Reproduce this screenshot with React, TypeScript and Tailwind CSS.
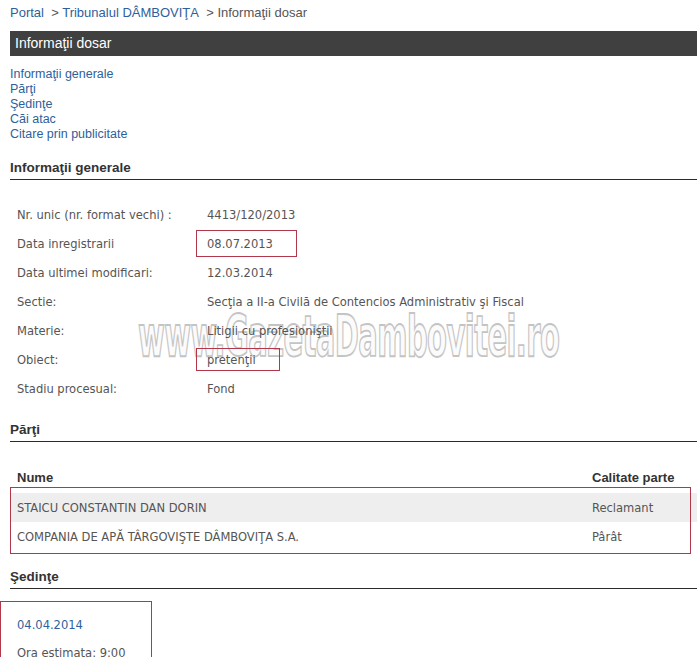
const links = [
  "Informaţii generale",
  "Părţi",
  "Şedinţe",
  "Căi atac",
  "Citare prin publicitate",
];

const details: { label: string; value: string; mark?: "date" | "obj" }[] = [
  { label: "Nr. unic (nr. format vechi) :", value: "4413/120/2013" },
  { label: "Data inregistrarii", value: "08.07.2013", mark: "date" },
  { label: "Data ultimei modificari:", value: "12.03.2014" },
  { label: "Sectie:", value: "Secţia a II-a Civilă de Contencios Administrativ şi Fiscal" },
  { label: "Materie:", value: "Litigii cu profesioniştii" },
  { label: "Obiect:", value: "pretenţii", mark: "obj" },
  { label: "Stadiu procesual:", value: "Fond" },
];

const parti = [
  { nume: "STAICU CONSTANTIN DAN DORIN", calitate: "Reclamant" },
  { nume: "COMPANIA DE APĂ TÂRGOVIŞTE DÂMBOVIŢA S.A.", calitate: "Pârât" },
];

function Heading({ children, className = "" }: { children: React.ReactNode; className?: string }) {
  return (
    <div
      className={`pb-[4px] border-b border-[#2b2b2b] text-[13.5px] leading-[15px] font-bold text-[#333] ${className}`}
    >
      {children}
    </div>
  );
}

export default function App() {
  return (
    <div className="w-[697px] h-[664px] overflow-hidden bg-white">
      <div className="relative isolate h-[657px] overflow-hidden bg-white pl-[10px] font-['Liberation_Sans',Arial,sans-serif]">
        {/* watermark */}
        <div className="absolute -z-10 left-[138px] top-[301px] pointer-events-none select-none">
          <span className="block origin-left scale-x-[0.565] whitespace-nowrap font-['DejaVu_Sans_Condensed','DejaVu_Sans',sans-serif] font-bold text-[57px] leading-[70px] tracking-[-1px] text-[#fbfbfb] [-webkit-text-stroke:1.8px_#c4c4c4]">
            www.GazetaDambovitei.ro
          </span>
        </div>

        {/* breadcrumb */}
        <div className="h-[31px] pt-[5px] text-[13px] leading-[16px] text-[#555]">
          <span className="text-[#2e5f9c]">Portal</span>
          <span>&nbsp; &gt; </span>
          <span className="text-[#2e5f9c]">Tribunalul DÂMBOVIŢA</span>
          <span>&nbsp; &gt; Informaţii dosar</span>
        </div>

        {/* title bar */}
        <div className="h-[25px] bg-[#404040] pl-[5px] flex items-center text-white text-[14px]">
          Informaţii dosar
        </div>

        {/* anchors */}
        <div className="mt-[11px] flex flex-col text-[12.5px] leading-[15px] text-[#2e5f9c]">
          {links.map((l) => (
            <span key={l}>{l}</span>
          ))}
        </div>

        <Heading className="mt-[18px]">Informaţii generale</Heading>

        {/* general info */}
        <div className="mt-[20px] pl-[7px] font-['DejaVu_Sans_Condensed','DejaVu_Sans',sans-serif] text-[12.8px] text-[#555]">
          {details.map((d) => (
            <div key={d.label} className="h-[29px] flex items-center">
              <div className="w-[190px] shrink-0">{d.label}</div>
              <div className="relative">
                {d.value}
                {d.mark === "date" && (
                  <div className="absolute left-[-11px] top-[-4px] w-[101px] h-[27px] border border-[#b0384a]" />
                )}
                {d.mark === "obj" && (
                  <div className="absolute left-[-11px] top-[-2px] w-[84px] h-[23px] border border-[#b0384a]" />
                )}
              </div>
            </div>
          ))}
        </div>

        <Heading className="mt-[19px]">Părţi</Heading>

        {/* parties table */}
        <div className="relative mt-[27px]">
          <div className="h-[18px] flex items-center text-[13px] font-bold text-[#333]">
            <div className="flex-1 pl-[7px]">Nume</div>
            <div className="w-[105px]">Calitate parte</div>
          </div>
          <div className="pt-[6px] font-['DejaVu_Sans_Condensed','DejaVu_Sans',sans-serif] text-[12.8px] text-[#555]">
            {parti.map((p, i) => (
              <div
                key={p.nume}
                className={`h-[29px] flex items-center ${i === 0 ? "bg-[#eeeeee]" : ""}`}
              >
                <div className="flex-1 pl-[7px]">{p.nume}</div>
                <div className="w-[105px]">{p.calitate}</div>
              </div>
            ))}
          </div>
          <div className="absolute left-0 top-[18px] w-[681px] h-[67px] border border-[#b0384a]" />
        </div>

        <Heading className="mt-[18px]">Şedinţe</Heading>

        {/* hearings */}
        <div className="relative -ml-[10px] mt-[12px] w-[152px] h-[80px] border border-[#b0384a] pl-[16px] font-['DejaVu_Sans_Condensed','DejaVu_Sans',sans-serif] text-[12.8px]">
          <div className="mt-[14px] leading-[18px] text-[#2e5f9c]">04.04.2014</div>
          <div className="mt-[10px] leading-[18px] text-[#555]">Ora estimata: 9:00</div>
        </div>
      </div>
    </div>
  );
}
